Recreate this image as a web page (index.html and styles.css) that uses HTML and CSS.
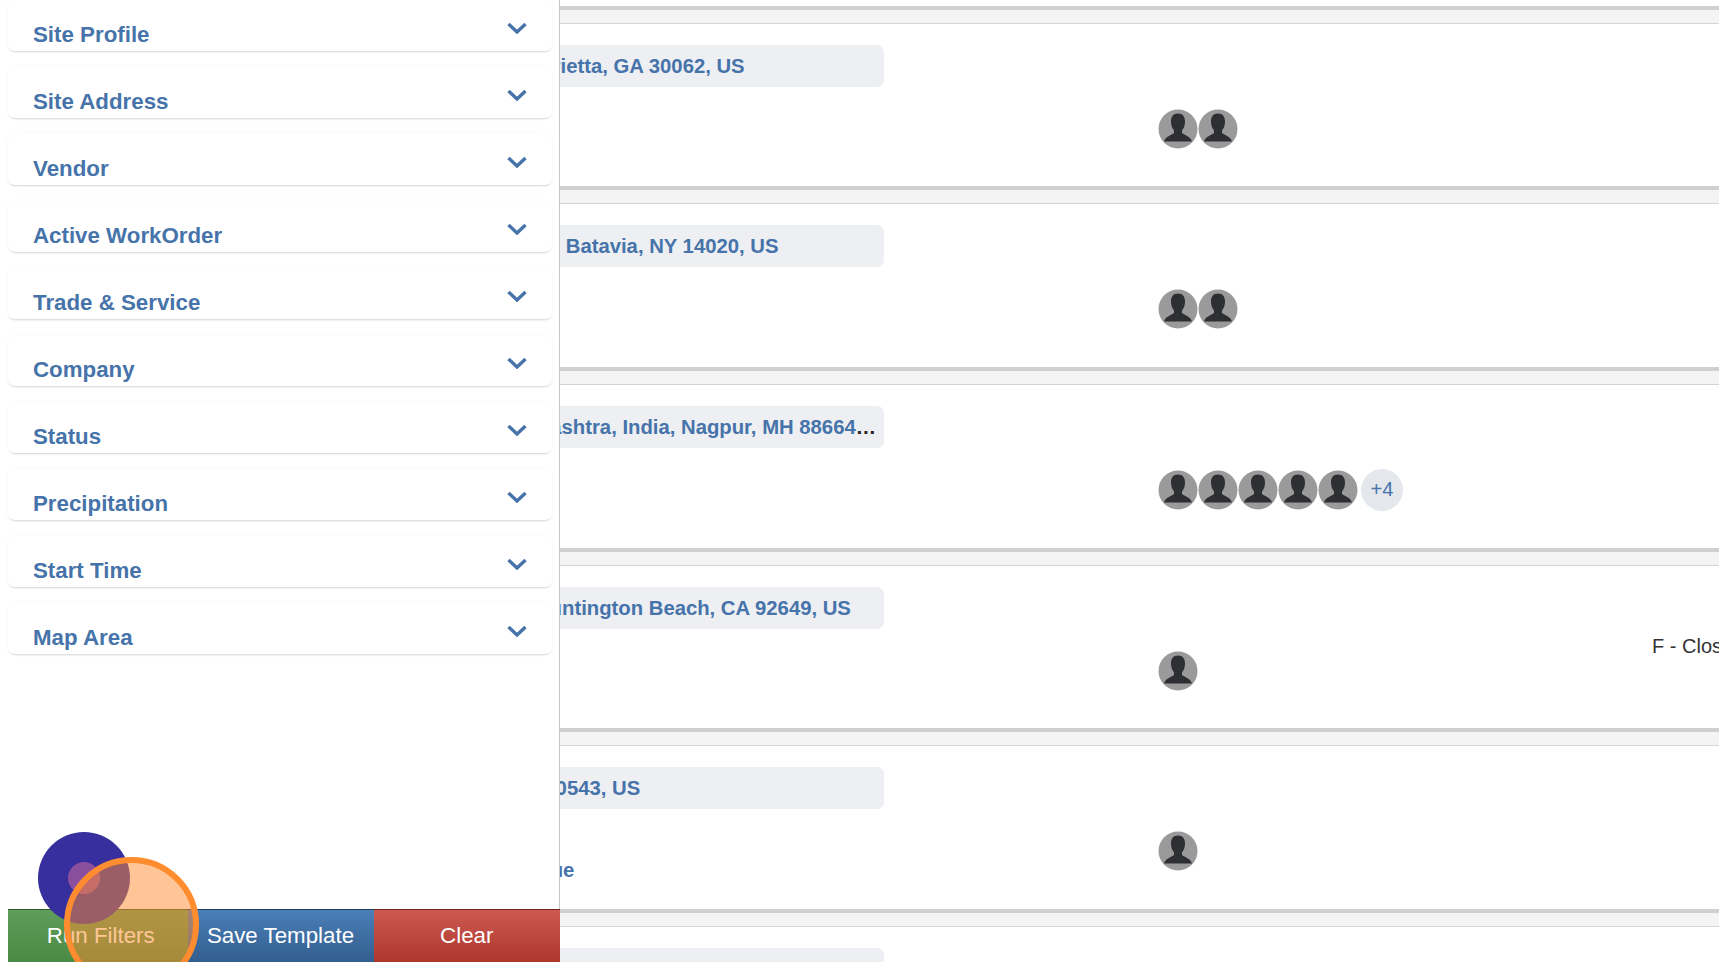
FILE: index.html
```html
<!DOCTYPE html>
<html lang="en">
<head>
<meta charset="utf-8">
<title>Sites</title>
<link rel="stylesheet" href="styles.css">
</head>
<body>
<svg class="defs" aria-hidden="true">
  <symbol id="person" viewBox="0 0 40 40">
    <circle cx="20" cy="20" r="19.5" fill="#9a9a9b"/>
    <path d="M20 4.5C15 4.5 13 8 13 12.5C13 16 14 19 16 21.5L16 24C13.5 26.5 7.5 27 6 32.5L34 32.5C32.5 27 26.5 26.5 24 24L24 21.5C26 19 27 16 27 12.5C27 8 25 4.5 20 4.5Z" fill="#2e2f32"/>
  </symbol>
  <symbol id="chev" viewBox="0 0 20 12">
    <path d="M1.5 2L10 10L18.5 2" fill="none" stroke="#4673a9" stroke-width="3.4"/>
  </symbol>
</svg>

<main class="list">
  <section class="row">
    <div class="row-head"></div>
    <div class="row-body">
      <div class="col-addr"><div class="pill"><span class="addr">1400 Powers Ferry St, Marietta, GA 30062, US</span></div></div>
      <div class="people"><svg class="avatar"><use href="#person"/></svg><svg class="avatar"><use href="#person"/></svg></div>
    </div>
  </section>
  <section class="row">
    <div class="row-head"></div>
    <div class="row-body">
      <div class="col-addr"><div class="pill"><span class="addr">4152 West Main Street Rd, Batavia, NY 14020, US</span></div></div>
      <div class="people"><svg class="avatar"><use href="#person"/></svg><svg class="avatar"><use href="#person"/></svg></div>
    </div>
  </section>
  <section class="row">
    <div class="row-head"></div>
    <div class="row-body">
      <div class="col-addr"><div class="pill"><span class="addr">IM Road, Dhantoli, Maharashtra, India, Nagpur, MH 886643, IN</span></div></div>
      <div class="people">
        <svg class="avatar"><use href="#person"/></svg><svg class="avatar"><use href="#person"/></svg><svg class="avatar"><use href="#person"/></svg><svg class="avatar"><use href="#person"/></svg><svg class="avatar"><use href="#person"/></svg>
        <span class="more">+4</span>
      </div>
    </div>
  </section>
  <section class="row">
    <div class="row-head"></div>
    <div class="row-body">
      <div class="col-addr"><div class="pill"><span class="addr">1701 Beach Blvd Ste V, Huntington Beach, CA 92649, US</span></div></div>
      <div class="people"><svg class="avatar"><use href="#person"/></svg></div>
      <div class="status">F - Closed</div>
    </div>
  </section>
  <section class="row">
    <div class="row-head"></div>
    <div class="row-body">
      <div class="col-addr">
        <div class="pill"><span class="addr">14 Oak Way, Oswego, IL 60543, US</span></div>
        <div class="note">Weekly Snow Removal Due</div>
      </div>
      <div class="people"><svg class="avatar"><use href="#person"/></svg></div>
    </div>
  </section>
  <section class="row">
    <div class="row-head"></div>
    <div class="row-body">
      <div class="col-addr"><div class="pill"><span class="addr">15, Hyderabad, Telangana, 14000, US, 500050</span></div></div>
    </div>
  </section>
</main>

<aside class="filters">
  <div class="cards">
    <div class="card"><span>Site Profile</span><svg class="chev"><use href="#chev"/></svg></div>
    <div class="card"><span>Site Address</span><svg class="chev"><use href="#chev"/></svg></div>
    <div class="card"><span>Vendor</span><svg class="chev"><use href="#chev"/></svg></div>
    <div class="card"><span>Active WorkOrder</span><svg class="chev"><use href="#chev"/></svg></div>
    <div class="card"><span>Trade &amp; Service</span><svg class="chev"><use href="#chev"/></svg></div>
    <div class="card"><span>Company</span><svg class="chev"><use href="#chev"/></svg></div>
    <div class="card"><span>Status</span><svg class="chev"><use href="#chev"/></svg></div>
    <div class="card"><span>Precipitation</span><svg class="chev"><use href="#chev"/></svg></div>
    <div class="card"><span>Start Time</span><svg class="chev"><use href="#chev"/></svg></div>
    <div class="card"><span>Map Area</span><svg class="chev"><use href="#chev"/></svg></div>
  </div>
  <div class="actions">
    <button class="btn btn-run">Run Filters</button>
    <button class="btn btn-save">Save Template</button>
    <button class="btn btn-clear">Clear</button>
  </div>
</aside>

<div class="cursor-dot"><div class="cursor-core"></div></div>
<div class="click-ring"></div>
</body>
</html>
```

FILE: styles.css
```css
* { box-sizing: border-box; }

html, body {
  margin: 0;
  height: 100%;
  overflow: hidden;
  background: #fff;
  font-family: "Liberation Sans", Arial, sans-serif;
}

.defs { position: absolute; width: 0; height: 0; }

/* Main list */
.list { padding-top: 5.8px; }

.row { height: 180.6px; }

.row-head {
  height: 18px;
  background: #f4f4f5;
  border-top: 4px solid #d0d0d0;
  border-bottom: 1px solid #d4d4d6;
}

.row-body {
  display: flex;
  padding-top: 21px;
  padding-left: 300px;
}

.col-addr { width: 584px; flex: none; }

.pill {
  height: 42px;
  line-height: 42px;
  padding: 0 8px;
  border-radius: 7px;
  background: #edeff3;
  color: #222;
  font-size: 20.3px;
  font-weight: 700;
  white-space: nowrap;
  overflow: hidden;
  text-overflow: ellipsis;
}

.addr { color: #4673a9; }

.note {
  margin-top: 49px;
  padding-left: 11px;
  color: #4673a9;
  font-size: 20.3px;
  font-weight: 700;
  line-height: 24px;
  white-space: nowrap;
}

.people {
  display: flex;
  align-items: center;
  width: 494px;
  height: 40px;
  margin-left: 274px;
  margin-top: 64px;
  flex: none;
}

.avatar { width: 40px; height: 40px; flex: none; }

.more {
  display: flex;
  align-items: center;
  justify-content: center;
  width: 42px;
  height: 42px;
  margin-left: 3px;
  border-radius: 50%;
  background: #e4e7ec;
  color: #4673a9;
  font-size: 20px;
}

.status {
  margin-top: 47px;
  color: #333;
  font-size: 20px;
  line-height: 24px;
  white-space: nowrap;
}

/* Filter panel */
.filters {
  position: absolute;
  top: 0;
  left: 0;
  bottom: 0;
  width: 560px;
  display: flex;
  flex-direction: column;
  justify-content: space-between;
  background: #fff;
  border-right: 1px solid #c6c6c8;
}

.cards {
  display: flex;
  flex-direction: column;
  gap: 16px;
  padding: 0 7px 0 8px;
}

.card {
  display: flex;
  justify-content: space-between;
  align-items: flex-start;
  height: 51px;
  padding: 22px 25px 6px;
  border-radius: 7px;
  background: #fff;
  box-shadow: 0 2px 2px -1px rgba(0, 0, 0, .15), 0 0 4px rgba(0, 0, 0, .03);
  color: #4673a9;
  font-size: 22.3px;
  font-weight: 700;
  line-height: 22px;
}

.card span { margin-top: 2px; }

.chev { width: 20px; height: 12px; flex: none; }

.actions {
  display: grid;
  grid-template-columns: 179.5fr 186fr 186.5fr;
  height: 53px;
  margin-left: 8px;
  margin-right: -1px;
}

.btn {
  border: 0;
  border-top: 1px solid rgba(0, 0, 0, .35);
  padding: 0;
  color: #fff;
  font: 22.3px "Liberation Sans", Arial, sans-serif;
}

.btn-run { padding-left: 6px; background: linear-gradient(#5f9e5a, #4a8a45); }
.btn-save { background: linear-gradient(#4a7fb8, #335e8e); }
.btn-clear { background: linear-gradient(#cb5a50, #af372e); }

/* Click overlay */
.cursor-dot {
  position: absolute;
  left: 38px;
  top: 832px;
  width: 92px;
  height: 92px;
  display: flex;
  align-items: center;
  justify-content: center;
  border-radius: 50%;
  background: #372f9e;
}

.cursor-core {
  width: 32px;
  height: 32px;
  border-radius: 50%;
  background: #8b4f9f;
}

.click-ring {
  position: absolute;
  left: 64px;
  top: 857px;
  width: 135px;
  height: 135px;
  border-radius: 50%;
  border: 6px solid #ff8c2e;
  background: rgba(255, 140, 46, .5);
}
```
